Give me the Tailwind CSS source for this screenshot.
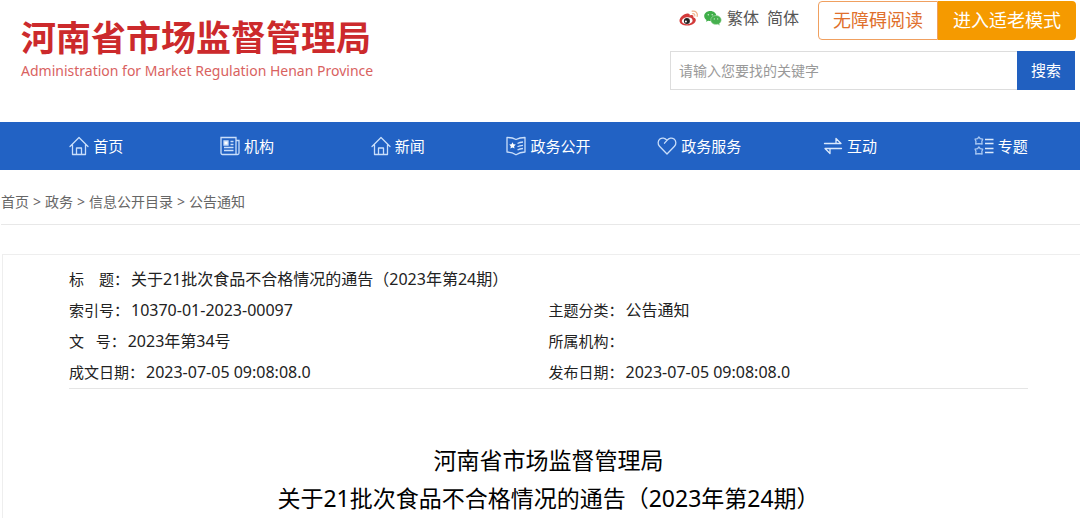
<!DOCTYPE html>
<html lang="zh-CN">
<head>
    <meta charset="UTF-8">
    <meta name="viewport" content="width=device-width, initial-scale=1.0">
    <title>河南省市场监督管理局</title>
    <script src="https://cdn.jsdelivr.net/npm/@tailwindcss/browser@4"></script>
</head>
<body class="flex flex-col min-h-screen bg-white text-[#222] font-['Noto_Sans','Noto_Sans_CJK_SC',sans-serif] overflow-x-hidden">
    <!-- header -->
    <header class="flex justify-between pb-8">
        <a href="#" class="block pl-[21px] pt-4">
            <h1 class="text-[35px] leading-[44px] font-bold text-[#cc2a2c]">河南省市场监督管理局</h1>
            <p class="text-[14px] leading-[22px] text-[#d9625f]">Administration for Market Regulation Henan Province</p>
        </a>
        <div class="w-[410px] pt-px">
            <div class="flex justify-between pr-1">
                <div class="flex items-center h-[34px] pl-[9px] text-[16px] text-[#555]">
                    <a href="#" aria-label="微博">
                        <svg class="w-5 h-5" viewBox="0 0 20 20" fill="none">
                            <path d="M8.400 5.500c-3.600.3-7.900 3.700-7.900 7.200 0 3.100 3.500 4.900 7.900 4.900 5 0 8.400-2.700 8.400-5.500 0-1.600-1.200-2.500-2.500-2.900.6-1.900-.8-2.900-3.600-1.800.3-1.300-.5-2.100-2.300-1.900z" fill="#d23a3a"/>
                            <ellipse cx="8.200" cy="12.700" rx="5.400" ry="3.500" fill="#fff" transform="rotate(-6 8.200 12.700)"/>
                            <circle cx="7.900" cy="12.900" r="3" fill="#222"/>
                            <circle cx="6.900" cy="13.500" r="1" fill="#fff"/>
                            <path d="M13.200 3.200c3.500-.7 5.900 2 5 5.200" stroke="#f0b08a" stroke-width="1.300" stroke-linecap="round"/>
                            <path d="M13.500 5.700c1.700-.3 2.700.8 2.300 2.300" stroke="#f0b08a" stroke-width="1.100" stroke-linecap="round"/>
                        </svg>
                    </a>
                    <a href="#" aria-label="微信" class="ml-1">
                        <svg class="w-5 h-5" viewBox="0 0 20 20">
                            <path d="M7.300 3C3.900 3 1.200 5.200 1.200 8c0 1.600.9 3 2.300 3.900L3 13.800l2.200-1.100c.7.200 1.400.3 2.100.3 3.400 0 6.100-2.200 6.100-5S10.700 3 7.300 3z" fill="#3fae49"/>
                            <path d="M13 7.500c-3 0-5.300 2-5.300 4.500s2.300 4.500 5.300 4.500c.6 0 1.200-.1 1.700-.2l1.900 1-.4-1.700c1.300-.8 2.100-2.100 2.100-3.600 0-2.500-2.300-4.500-5.300-4.500z" fill="#46b04e" stroke="#bfe5c0" stroke-width=".5"/>
                            <circle cx="5.300" cy="6.700" r=".7" fill="#d5efd6"/>
                            <circle cx="9.200" cy="6.700" r=".7" fill="#d5efd6"/>
                            <circle cx="11.300" cy="10.900" r=".6" fill="#d5efd6"/>
                            <circle cx="14.700" cy="10.900" r=".6" fill="#d5efd6"/>
                        </svg>
                    </a>
                    <a href="#" class="ml-1">繁体</a>
                    <a href="#" class="ml-2">简体</a>
                </div>
                <div class="flex h-[39px] text-[18px]">
                    <button type="button" class="w-[120px] border border-[#f0a060] rounded-l-sm text-[#e0702c]">无障碍阅读</button>
                    <button type="button" class="w-[138px] bg-[#f59a00] rounded-r-sm text-white">进入适老模式</button>
                </div>
            </div>
            <form class="flex h-[39px] mt-[11px] pr-[5px]">
                <input type="text" aria-label="搜索关键字" placeholder="请输入您要找的关键字"
                       class="flex-1 min-w-0 px-2 border border-r-0 border-[#ddd] text-[14px] placeholder:text-[#999] focus:outline-none">
                <button type="submit" class="w-[58px] bg-[#2160c0] text-white text-[15px]">搜索</button>
            </form>
        </div>
    </header>

    <!-- main nav -->
    <nav class="grid grid-cols-7 h-12 pl-[21px] pr-1 bg-[#2262c4] text-white text-[15px]">
        <a href="#" class="flex items-center justify-center gap-1">
            <svg class="w-5 h-5" viewBox="0 0 20 20" fill="none" stroke="#c9defa" stroke-width="1.300" stroke-linejoin="round" stroke-linecap="round">
                <path d="M1 10.500L10 1.500l9 9M3.500 9v9.500h13V9M7.500 18.500V12h5v6.500"/>
            </svg>
            首页
        </a>
        <a href="#" class="flex items-center justify-center gap-1">
            <svg class="w-5 h-5" viewBox="0 0 20 20" fill="none" stroke="#c9defa" stroke-width="1.300">
                <path d="M1 1.500h15v17H2.500A1.500 1.500 0 0 1 1 17zM16 4.500h3V17a1.500 1.500 0 0 1-1.500 1.500H15"/>
                <path d="M10.500 5.500h3M10.500 8.500h3M4 11.500h9.500M4 14.500h9.500"/>
                <path d="M4 5h4v4H4z" fill="#fff"/>
            </svg>
            机构
        </a>
        <a href="#" class="flex items-center justify-center gap-1">
            <svg class="w-5 h-5" viewBox="0 0 20 20" fill="none" stroke="#c9defa" stroke-width="1.300" stroke-linejoin="round" stroke-linecap="round">
                <path d="M1 10.500L10 1.500l9 9M3.500 9v9.500h13V9M7.500 18.500V12h5v6.500"/>
            </svg>
            新闻
        </a>
        <a href="#" class="flex items-center justify-center gap-1">
            <svg class="w-5 h-5" viewBox="0 0 20 20" fill="none" stroke="#c9defa" stroke-width="1.300" stroke-linejoin="round">
                <path d="M1 1.500c3.500 0 6.500.6 9 2 2.500-1.400 5.500-2 9-2V16c-3.500 0-6.500 1-9 2.800C7.500 17 4.500 16 1 16z"/>
                <path d="M11.500 7.500c1.500-.9 3-1.300 5.500-1.500M11.500 10.800c1.500-.9 3-1.300 5.500-1.500M11.500 14c1.500-.9 3-1.300 5.500-1.500"/>
                <path d="M6.500 6.200l1 2.100 2.300.3-1.700 1.600.4 2.300-2-1.100-2.100 1.100.4-2.300-1.600-1.600 2.300-.3z" fill="#fff" stroke="none"/>
            </svg>
            政务公开
        </a>
        <a href="#" class="flex items-center justify-center gap-1">
            <svg class="w-5 h-5" viewBox="0 0 20 20" fill="none" stroke="#c9defa" stroke-width="1.300" stroke-linejoin="round" stroke-linecap="round">
                <path d="M10 18L2.500 10.300C.5 8.200.8 4.800 2.900 3.100 5 1.400 8 1.800 10 4.300c2-2.500 5-2.900 7.100-1.200 2.100 1.700 2.400 5.100.4 7.200zM10 4.300L7.500 7.200"/>
            </svg>
            政务服务
        </a>
        <a href="#" class="flex items-center justify-center gap-1">
            <svg class="w-5 h-5" viewBox="0 0 20 20" fill="none" stroke="#dbe9fc" stroke-width="1.300" stroke-linejoin="round" stroke-linecap="round">
                <path d="M1.500 7.500H18l-5-5v5M18.500 12.500H2l5 5v-5"/>
            </svg>
            互动
        </a>
        <a href="#" class="flex items-center justify-center gap-1">
            <svg class="w-5 h-5" viewBox="0 0 20 20" fill="none" stroke="#a9c8f2" stroke-width="1.300" stroke-linejoin="round">
                <path d="M4.900 1l1.300 1.700 2.500.5-.9 2.300.3 2.500-3.200-.3-3.200.3.300-2.500-.9-2.300 2.500-.5z"/>
                <path d="M4.900 11l1.300 1.700 2.500.5-.9 2.300.3 2.500-3.200-.3-3.200.3.300-2.500-.9-2.300 2.500-.5z"/>
                <path d="M11 3.500h8.500M11 7.500h8.500M11 12.500h8.500M11 16.500h8.500" stroke="#dbe9fc"/>
            </svg>
            专题
        </a>
    </nav>

    <!-- breadcrumb -->
    <div class="flex items-center gap-1 h-[55px] ml-px pt-[9px] pb-px border-b border-[#e8e8e8] text-[14px] text-[#666]">
        <a href="#">首页</a>
        <span>&gt;</span>
        <a href="#">政务</a>
        <span>&gt;</span>
        <a href="#">信息公开目录</a>
        <span>&gt;</span>
        <a href="#">公告通知</a>
    </div>

    <!-- article -->
    <main class="grow mt-[29px] ml-0.5 pl-[66px] pr-[52px] pt-[9px] border-t border-l border-[#eee]">
        <dl class="grid grid-cols-2 border-b border-[#e5e5e5] text-[16px] leading-[31px]">
            <div class="flex gap-0.5 col-span-2">
                <dt class="text-[15px]">标&emsp;题：</dt>
                <dd>关于21批次食品不合格情况的通告（2023年第24期）</dd>
            </div>
            <div class="flex gap-0.5">
                <dt class="text-[15px]">索引号：</dt>
                <dd>10370-01-2023-00097</dd>
            </div>
            <div class="flex gap-0.5">
                <dt class="text-[15px]">主题分类：</dt>
                <dd>公告通知</dd>
            </div>
            <div class="flex gap-0.5">
                <dt class="text-[15px]">文&nbsp;&nbsp;&nbsp;号：</dt>
                <dd>2023年第34号</dd>
            </div>
            <div class="flex gap-0.5">
                <dt class="text-[15px]">所属机构：</dt>
                <dd></dd>
            </div>
            <div class="flex gap-0.5">
                <dt class="text-[15px]">成文日期：</dt>
                <dd>2023-07-05 09:08:08.0</dd>
            </div>
            <div class="flex gap-0.5">
                <dt class="text-[15px]">发布日期：</dt>
                <dd>2023-07-05 09:08:08.0</dd>
            </div>
        </dl>
        <h2 class="mt-[52px] text-center text-[23px] leading-[38px] text-black">
            河南省市场监督管理局<br>
            关于21批次食品不合格情况的通告（2023年第24期）
        </h2>
    </main>
</body>
</html>
